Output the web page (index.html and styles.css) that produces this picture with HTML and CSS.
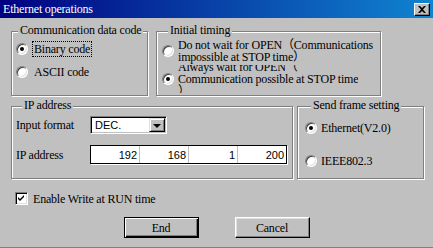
FILE: index.html
```html
<!DOCTYPE html>
<html lang="en">

<head>
    <meta charset="UTF-8">
    <meta name="viewport" content="width=device-width, initial-scale=1.0">
    <title>Ethernet operations</title>
    <link rel="stylesheet" href="styles.css">
</head>

<body>
    <div class="window">
        <div class="titlebar">
            <span class="titlebar__text">Ethernet operations</span>
            <div class="titlebar__close">
                <svg width="8" height="7" viewBox="0 0 8 7">
                    <path d="M0 0h2l2 2 2-2h2L5 3.5 8 7H6L4 5 2 7H0l3-3.5z" fill="#000" />
                </svg>
            </div>
        </div>

        <div class="content">
            <div class="row row--top">
                <div class="group group--code">
                    <span class="group__title">Communication data code</span>
                    <div class="option option--binary">
                        <span class="radio radio--on"></span>
                        <span class="option__label option__label--focus">Binary code</span>
                    </div>
                    <div class="option option--ascii">
                        <span class="radio"></span>
                        <span class="option__label">ASCII code</span>
                    </div>
                </div>

                <div class="group group--timing">
                    <span class="group__title">Initial timing</span>
                    <div class="option option--nowait">
                        <span class="radio"></span>
                        <span class="option__text">Do not wait for OPEN（Communications<br>impossible at STOP time）</span>
                    </div>
                    <div class="option option--wait">
                        <span class="radio radio--on"></span>
                        <div class="option__clip">
                            <span class="option__text">Always wait for OPEN（<br>Communication possible at STOP time<br>）</span>
                        </div>
                    </div>
                </div>
            </div>

            <div class="row row--middle">
                <div class="group group--ip">
                    <span class="group__title">IP address</span>
                    <div class="field field--format">
                        <span class="field__label">Input format</span>
                        <div class="combo">
                            <span class="combo__value">DEC.</span>
                            <span class="combo__button"><span class="combo__arrow"></span></span>
                        </div>
                    </div>
                    <div class="field field--address">
                        <span class="field__label">IP address</span>
                        <div class="ipbox">
                            <span class="ipbox__part">192</span>
                            <span class="ipbox__part">168</span>
                            <span class="ipbox__part">1</span>
                            <span class="ipbox__part">200</span>
                        </div>
                    </div>
                </div>

                <div class="group group--frame">
                    <span class="group__title">Send frame setting</span>
                    <div class="option option--ethernet">
                        <span class="radio radio--on"></span>
                        <span class="option__text">Ethernet(V2.0)</span>
                    </div>
                    <div class="option option--ieee">
                        <span class="radio"></span>
                        <span class="option__text">IEEE802.3</span>
                    </div>
                </div>
            </div>

            <div class="check">
                <span class="check__box">
                    <svg width="7" height="7" viewBox="0 0 7 7">
                        <path d="M0 2l2 2 4-4v2L2 6 0 4z" fill="#000" />
                    </svg>
                </span>
                <span class="check__label">Enable Write at RUN time</span>
            </div>

            <div class="buttons">
                <div class="button button--default">End</div>
                <div class="button">Cancel</div>
            </div>
        </div>
    </div>
</body>

</html>
```

FILE: styles.css
```css
*,
*::after,
*::before {
    padding: 0;
    margin: 0;
    box-sizing: border-box;
}

html,
body {
    height: 100%;
}

body {
    background: #c0c0c0;
    font-family: "Liberation Serif", "Noto Sans CJK TC", serif;
    font-size: 12px;
    letter-spacing: -0.2px;
    line-height: 12px;
    color: #000;
    white-space: nowrap;
}

.window {
    width: 433px;
    height: 248px;
    border-bottom: 1px solid #808080;
    overflow: hidden;
}

/* title bar */

.titlebar {
    height: 18px;
    padding: 0 3px 0 3px;
    display: flex;
    align-items: center;
    justify-content: space-between;
    background: linear-gradient(to right, #000080, #1084d0);
}

.titlebar__text {
    color: #fff;
    line-height: 18px;
}

.titlebar__close {
    width: 16px;
    height: 13px;
    display: flex;
    align-items: center;
    justify-content: center;
    background: #c0c0c0;
    border: 1px solid;
    border-color: #fff #000 #000 #fff;
    box-shadow: inset -1px -1px 0 #808080;
}

/* layout */

.content {
    padding-left: 11px;
}

.row {
    display: flex;
}

.row--top {
    margin-top: 13px;
    gap: 8px;
}

.row--middle {
    margin-top: 10px;
    gap: 4px;
}

/* group boxes */

.group {
    border: 1px solid #808080;
    box-shadow: inset 1px 1px 0 #fff, 1px 1px 0 #fff;
    display: flex;
    flex-direction: column;
}

.group__title {
    align-self: flex-start;
    margin: -8px 0 0 6px;
    padding: 0 2px;
    background: #c0c0c0;
    line-height: 12px;
}

.group--code {
    width: 137px;
    height: 65px;
    padding-left: 4px;
}

.group--code .group__title {
    margin-left: 2px;
}

.group--timing {
    width: 225px;
    height: 65px;
    padding-left: 5px;
}

.group--ip {
    width: 282px;
    height: 73px;
    padding-left: 4px;
}

.group--frame {
    width: 127px;
    height: 73px;
    padding-left: 7px;
}

/* radio options */

.option {
    display: flex;
    align-items: center;
}

.option--binary {
    height: 16px;
    margin-top: 5px;
}

.option--ascii {
    height: 16px;
    margin-top: 7px;
}

.option--nowait {
    height: 24px;
    margin-top: 3px;
}

.option--wait {
    height: 28px;
    margin-top: 2px;
}

.option--ethernet {
    height: 16px;
    margin-top: 9px;
}

.option--ieee {
    height: 16px;
    margin-top: 17px;
}

.radio {
    flex: none;
    position: relative;
    width: 12px;
    height: 12px;
    border-radius: 50%;
    background: #fff;
    border: 1px solid;
    border-color: #808080 #fff #fff #808080;
    box-shadow: inset 1px 1px 0 #404040, inset -1px -1px 0 #dfdfdf;
}

.radio--on::after {
    content: '';
    position: absolute;
    top: 3px;
    left: 3px;
    width: 4px;
    height: 4px;
    border-radius: 50%;
    background: #000;
}

.option__label {
    margin-left: 5px;
    padding: 1px;
}

.option__label--focus {
    outline: 1px dotted #000;
}

.option__text {
    margin-left: 4px;
}

.option__clip {
    height: 28px;
    overflow: hidden;
    display: flex;
    align-items: center;
}

.option__clip .option__text {
    flex: none;
}

/* ip address fields */

.field {
    display: flex;
    align-items: center;
}

.field--format {
    margin-top: 5px;
    height: 18px;
}

.field--address {
    margin-top: 11px;
    height: 19px;
}

.field__label {
    width: 74px;
}

.combo {
    width: 77px;
    height: 18px;
    display: flex;
    align-items: center;
    justify-content: space-between;
    background: #fff;
    border: 1px solid;
    border-color: #808080 #fff #fff #808080;
    box-shadow: inset 1px 1px 0 #000, inset -1px -1px 0 #c0c0c0;
    padding: 1px;
}

.combo__value {
    padding-left: 3px;
    font-family: "Liberation Sans", sans-serif;
    font-size: 11px;
    letter-spacing: 0;
}

.combo__button {
    width: 16px;
    height: 14px;
    display: flex;
    align-items: center;
    justify-content: center;
    background: #c0c0c0;
    border: 1px solid;
    border-color: #dfdfdf #000 #000 #dfdfdf;
    box-shadow: inset 1px 1px 0 #fff, inset -1px -1px 0 #808080;
}

.combo__arrow {
    width: 0;
    height: 0;
    border-left: 4px solid transparent;
    border-right: 4px solid transparent;
    border-top: 4px solid #000;
    margin-top: 1px;
}

.ipbox {
    width: 197px;
    height: 19px;
    display: flex;
    background: #fff;
    border: 1px solid #000;
    box-shadow: 1px 1px 0 #fff;
}

.ipbox__part {
    flex: 1;
    display: flex;
    align-items: center;
    justify-content: flex-end;
    padding-right: 2px;
    border-left: 1px solid #c0c0c0;
    font-family: "Liberation Sans", sans-serif;
    font-size: 11px;
    letter-spacing: 0;
}

.ipbox__part:first-child {
    border-left: none;
}

/* checkbox */

.check {
    margin: 13px 0 0 4px;
    height: 13px;
    display: flex;
    align-items: center;
}

.check__box {
    width: 13px;
    height: 13px;
    display: flex;
    align-items: center;
    justify-content: center;
    background: #fff;
    border: 1px solid;
    border-color: #808080 #fff #fff #808080;
    box-shadow: inset 1px 1px 0 #000, inset -1px -1px 0 #dfdfdf;
}

.check__label {
    margin-left: 5px;
}

/* buttons */

.buttons {
    margin: 12px 0 0 -11px;
    display: flex;
    justify-content: center;
    gap: 36px;
}

.button {
    width: 75px;
    height: 21px;
    display: flex;
    align-items: center;
    justify-content: center;
    background: #c0c0c0;
    border: 1px solid;
    border-color: #fff #000 #000 #fff;
    box-shadow: inset -1px -1px 0 #808080, inset 1px 1px 0 #dfdfdf;
}

.button--default {
    border: 1px solid #000;
    box-shadow: inset 1px 1px 0 #fff, inset -1px -1px 0 #000, inset -2px -2px 0 #808080;
}
```
